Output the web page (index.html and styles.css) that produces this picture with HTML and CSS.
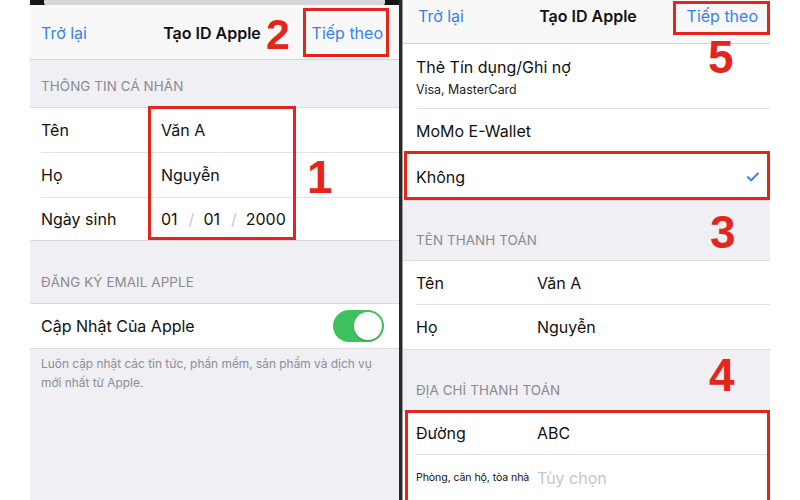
FILE: index.html
```html
<!DOCTYPE html>
<html lang="vi">
<head>
<meta charset="utf-8">
<title>Tạo ID Apple</title>
<link rel="stylesheet" href="styles.css">
</head>
<body>
<div class="stage">
  <div class="gutter"></div>

  <section class="phone phone-left">
    <div class="topstrip"><div class="topcard"></div></div>
    <header class="nav nav-left">
      <span class="nav-btn">Trở lại</span>
      <span class="nav-title">Tạo ID Apple</span>
      <span class="nav-btn nav-next">Tiếp theo</span>
    </header>

    <div class="sec-head sec-head-1">THÔNG TIN CÁ NHÂN</div>
    <div class="group">
      <div class="row row-a"><span class="label">Tên</span><span class="value">Văn A</span></div>
      <div class="row row-a"><span class="label">Họ</span><span class="value">Nguyễn</span></div>
      <div class="row row-a row-last-l"><span class="label">Ngày sinh</span><span class="value date">01<span class="slash">/</span>01<span class="slash">/</span>2000</span></div>
    </div>

    <div class="sec-head sec-head-2">ĐĂNG KÝ EMAIL APPLE</div>
    <div class="group">
      <div class="row row-toggle"><span class="label">Cập Nhật Của Apple</span><span class="toggle"><span class="knob"></span></span></div>
    </div>
    <p class="footnote">Luôn cập nhật các tin tức, phần mềm, sản phẩm và dịch vụ<br>mới nhất từ Apple.</p>

    <span class="box box-2"></span>
    <span class="num num-2">2</span>
    <span class="box box-1"></span>
    <span class="num num-1">1</span>
  </section>

  <div class="divider"></div>

  <section class="phone phone-right">
    <header class="nav nav-right">
      <span class="nav-btn">Trở lại</span>
      <span class="nav-title">Tạo ID Apple</span>
      <span class="nav-btn nav-next">Tiếp theo</span>
    </header>

    <div class="group group-top">
      <div class="row row-b row-card">
        <span class="card-title">Thẻ Tín dụng/Ghi nợ</span>
        <span class="card-sub">Visa, MasterCard</span>
      </div>
      <div class="row row-b row-momo"><span class="label">MoMo E-Wallet</span></div>
      <div class="row row-b row-none"><span class="label">Không</span>
        <svg class="check" width="12" height="10" viewBox="0 0 12 10"><polyline points="1,5.2 4.2,8.4 11,1.4" fill="none" stroke="#2f7cf6" stroke-width="2" stroke-linecap="round" stroke-linejoin="round"/></svg>
      </div>
    </div>

    <div class="sec-head sec-head-3">TÊN THANH TOÁN</div>
    <div class="group">
      <div class="row row-b row-c"><span class="label label-r">Tên</span><span class="value">Văn A</span></div>
      <div class="row row-b row-c"><span class="label label-r">Họ</span><span class="value">Nguyễn</span></div>
    </div>

    <div class="sec-head sec-head-4">ĐỊA CHỈ THANH TOÁN</div>
    <div class="group">
      <div class="row row-b row-c"><span class="label label-r">Đường</span><span class="value">ABC</span></div>
      <div class="row row-b"><span class="label label-r label-small">Phòng, căn hộ, tòa nhà</span><span class="value placeholder">Tùy chọn</span></div>
    </div>

    <span class="box box-5"></span>
    <span class="num num-5">5</span>
    <span class="box box-3"></span>
    <span class="num num-3">3</span>
    <span class="box box-4"></span>
    <span class="num num-4">4</span>
  </section>
</div>
</body>
</html>
```

FILE: styles.css
```css
* { box-sizing: border-box; }

html, body {
  margin: 0;
  padding: 0;
  background: #ffffff;
}

body {
  font-family: "Inter", "Noto Sans", "Liberation Sans", sans-serif;
  color: #111111;
}

.stage {
  display: flex;
  width: 800px;
  height: 500px;
  overflow: hidden;
}

.gutter {
  width: 30px;
  flex: none;
}

.phone {
  position: relative;
  flex: none;
  height: 500px;
  background: #efeff4;
  overflow: hidden;
}

.phone-left { width: 369px; }
.phone-right { width: 367px; }

.divider {
  flex: none;
  width: 4px;
  height: 500px;
  background: #2a2a2a;
  border-right: 1px solid #9a9a9a;
}

/* top strip of the modal sheet */
.topstrip {
  height: 5px;
  background: #161616;
  padding: 0 14px;
}
.topcard {
  height: 5px;
  background: #d6d6d8;
  border-radius: 0 0 2px 2px;
}

/* nav bar */
.nav {
  display: grid;
  grid-template-columns: 1fr auto 1fr;
  background: #f8f8f8;
  border-bottom: 1px solid #d4d4d6;
  font-size: 16px;
  line-height: 18px;
}
.nav-left {
  height: 55px;
  align-items: center;
  padding: 2px 16px 0 11px;
}
.nav-right {
  height: 44px;
  align-items: start;
  padding: 7px 12px 0 15px;
}
.nav-btn {
  color: #3482f0;
}
.nav-next {
  justify-self: end;
}
.nav-title {
  font-weight: 600;
  color: #111;
}

/* section headers */
.sec-head {
  display: flex;
  align-items: flex-end;
  padding: 0 0 13px 11px;
  font-size: 13.4px;
  line-height: 16px;
  color: #8a8a8f;
  letter-spacing: 0.1px;
}
.sec-head-1 { height: 47px; }
.sec-head-2 { height: 62px; }
.sec-head-3 { height: 59px; padding-left: 13px; padding-bottom: 12px; }
.sec-head-4 { height: 60px; padding-left: 13px; padding-bottom: 12px; }

/* grouped list */
.group {
  background: #ffffff;
  border-top: 1px solid #dcdce0;
  border-bottom: 1px solid #dcdce0;
}
.group-top { border-top: none; }

.row {
  display: flex;
  align-items: center;
  border-bottom: 1px solid #e2e2e6;
  font-size: 16px;
  line-height: 20px;
}
.row:last-child { border-bottom: none; }

.row-a {
  height: 45px;
  margin-left: 11px;
}
.row-last-l { height: 42px; }

.row-b {
  height: 45px;
  margin-left: 13px;
}
.row-c { height: 44px; }

.label {
  width: 120px;
  flex: none;
}
.label-r { width: 121px; }
.label-small {
  font-size: 10.6px;
  line-height: 14px;
  letter-spacing: -0.1px;
}

.value { color: #111; }
.placeholder { color: #c5c5c8; }

.date { display: flex; }
.slash {
  color: #c8c8cc;
  padding: 0 9px 0 11px;
}

/* toggle row */
.row-toggle {
  height: 44px;
  margin-left: 11px;
  justify-content: space-between;
  padding-right: 15px;
}
.row-toggle .label { width: auto; }
.toggle {
  width: 51px;
  height: 32px;
  border-radius: 16px;
  background: #3fc25e;
  padding: 2px;
  display: flex;
  justify-content: flex-end;
}
.knob {
  width: 28px;
  height: 28px;
  border-radius: 50%;
  background: #ffffff;
  box-shadow: 0 1px 2px rgba(0, 0, 0, 0.2);
}

.footnote {
  margin: 0;
  padding: 5px 11px 0;
  font-size: 11.9px;
  line-height: 19px;
  color: #8e8e93;
}

/* right panel rows */
.row-card {
  height: 65px;
  flex-direction: column;
  align-items: flex-start;
  justify-content: flex-start;
  padding-top: 13px;
}
.card-title {
  font-size: 16px;
  line-height: 20px;
}
.card-sub {
  margin-top: 5px;
  font-size: 12.4px;
  line-height: 16px;
  color: #222;
}
.row-momo { height: 44px; }
.row-none {
  height: 47px;
  justify-content: space-between;
  padding-right: 11px;
}
.check { display: block; }

/* annotations */
.box {
  position: absolute;
  border: 3px solid #e3261c;
}
.num {
  position: absolute;
  font-family: "Liberation Sans", "Arial", sans-serif;
  font-weight: 700;
  font-size: 46px;
  line-height: 1;
  color: #e3261c;
}

.box-2 { left: 273px; top: 8px; width: 86px; height: 49px; }
.num-2 { left: 236px; top: 13px; font-size: 43px; }

.box-1 { left: 118px; top: 106px; width: 148px; height: 134px; }
.num-1 { left: 277px; top: 154px; }

.box-5 { left: 270px; top: 1px; width: 97px; height: 34px; }
.num-5 { left: 305px; top: 34px; }

.box-3 { left: 1px; top: 151px; width: 366px; height: 49px; }
.num-3 { left: 307px; top: 209px; }

.box-4 { left: 2px; top: 410px; width: 365px; height: 100px; }
.num-4 { left: 306px; top: 352px; }
```
